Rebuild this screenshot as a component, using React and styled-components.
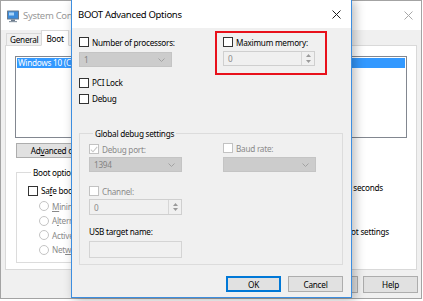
import React from 'react';
import styled, { createGlobalStyle } from 'styled-components';

const uiFont = `"Noto Sans", "Open Sans", sans-serif`;

const GlobalStyle = createGlobalStyle`
  html, body {
    margin: 0;
    padding: 0;
    background: #fff;
  }
  body {
    font-family: ${uiFont};
    font-size: 8.2px;
    letter-spacing: -0.25px;
    color: #000;
  }
  #root {
    width: 423px;
    height: 301px;
  }
`;

const Desktop = styled.div`
  position: relative;
  width: 423px;
  height: 301px;
  overflow: hidden;
  background: #fff;
`;

/* ---------- back window: System Configuration ---------- */

const BackWindow = styled.section`
  position: absolute;
  left: 0;
  top: 0;
  width: 422px;
  height: 299px;
  box-sizing: border-box;
  border: 1px solid #a3a3a3;
  background: #f0f0f0;
  display: flex;
  flex-direction: column;
`;

const BackTitle = styled.header`
  height: 29px;
  flex: none;
  background: #fff;
  display: flex;
  align-items: center;
  gap: 3px;
  padding: 0 8px 0 5px;
  color: #999;
  font-size: 9.5px;
  letter-spacing: -0.3px;
  svg.close {
    margin-left: auto;
  }
`;

const TabStrip = styled.div`
  display: flex;
  align-items: flex-end;
  height: 16px;
  padding-left: 5px;
  margin-bottom: -1px;
  position: relative;
  z-index: 1;
`;

const Tab = styled.div`
  box-sizing: border-box;
  height: ${(p) => (p.$active ? 16 : 13)}px;
  padding: 0 ${(p) => (p.$active ? 4 : 3)}px;
  display: flex;
  align-items: center;
  border: 1px solid #d9d9d9;
  border-bottom-color: ${(p) => (p.$active ? '#fff' : '#d9d9d9')};
  border-right: ${(p) => (p.$active ? '1px solid #d9d9d9' : 'none')};
  background: ${(p) => (p.$active ? '#fff' : '#f0f0f0')};
`;

const TabPanel = styled.div`
  box-sizing: border-box;
  margin: 0 0 0 4px;
  width: 412px;
  height: 225px;
  border: 1px solid #d9d9d9;
  background: #fff;
  padding: 10px 0 0 9px;
  display: flex;
  flex-direction: column;
`;

const ListBox = styled.div`
  box-sizing: border-box;
  width: 392px;
  height: 82px;
  border: 1px solid #828790;
  padding: 1px;
`;

const ListItem = styled.div`
  height: 10px;
  line-height: 10px;
  padding-left: 1px;
  white-space: nowrap;
  background: ${(p) => (p.$selected ? '#3399ff' : 'transparent')};
  color: ${(p) => (p.$selected ? '#fff' : '#000')};
`;

const ButtonRow = styled.div`
  display: flex;
  gap: ${(p) => p.$gap || 5}px;
  justify-content: ${(p) => (p.$end ? 'flex-end' : 'flex-start')};
  margin-top: ${(p) => p.$top || 0}px;
  padding: 0 ${(p) => p.$right || 0}px 0 ${(p) => p.$left || 0}px;
`;

const Button = styled.button`
  box-sizing: border-box;
  width: ${(p) => p.$w || 55}px;
  height: ${(p) => p.$h || 17}px;
  padding: 0;
  font: inherit;
  letter-spacing: inherit;
  color: #000;
  background: #e1e1e1;
  border: 1px solid ${(p) => (p.$default ? '#0078d7' : '#adadad')};
  box-shadow: ${(p) => (p.$default ? 'inset 0 0 0 1px #0078d7' : 'none')};
  u {
    text-decoration: underline;
  }
`;

const LowerArea = styled.div`
  display: flex;
  margin-top: 9px;
  padding-left: 1px;
`;

const GroupBox = styled.fieldset`
  box-sizing: border-box;
  margin: 0;
  width: ${(p) => p.$w}px;
  height: ${(p) => p.$h}px;
  border: 1px solid #dcdcdc;
  padding: ${(p) => p.$pad};
  legend {
    padding: 0 2px;
    margin-left: ${(p) => p.$legendLeft || 3}px;
    line-height: 11px;
    color: #000;
  }
`;

const OptionList = styled.div`
  display: flex;
  flex-direction: column;
  gap: ${(p) => p.$gap}px;
  padding: ${(p) => p.$top || 0}px 0 0 ${(p) => p.$indent || 0}px;
`;

const SideColumn = styled.div`
  margin-left: auto;
  margin-right: 27px;
  display: flex;
  flex-direction: column;
  align-items: flex-end;
  padding-top: 2px;
`;

const SideLabel = styled.div`
  align-self: flex-start;
  line-height: 11px;
`;

const TimeoutRow = styled.div`
  display: flex;
  align-items: center;
  gap: 4px;
  margin-right: 6px;
`;

const SmallInput = styled.div`
  box-sizing: border-box;
  width: 30px;
  height: 15px;
  border: 1px solid #7a7a7a;
  padding-left: 3px;
  line-height: 13px;
`;

const PermanentLabel = styled.div`
  margin-top: 31px;
  display: flex;
  gap: 3px;
  line-height: 11px;
`;

/* ---------- shared controls ---------- */

const Row = styled.label`
  display: flex;
  align-items: center;
  gap: 3px;
  height: ${(p) => p.$h || 11}px;
  margin-top: ${(p) => p.$top || 0}px;
  color: ${(p) => (p.$disabled ? '#8a8a8a' : '#000')};
  white-space: nowrap;
`;

const Box = styled.span`
  box-sizing: border-box;
  flex: none;
  width: 10px;
  height: 10px;
  border: 1px solid ${(p) => (p.$disabled ? '#c2c2c2' : '#333')};
  background: #fff;
  display: flex;
  align-items: center;
  justify-content: center;
`;

const Radio = styled.span`
  box-sizing: border-box;
  flex: none;
  width: 10px;
  height: 10px;
  border-radius: 50%;
  border: 1px solid #c4c4c4;
  background: #fff;
`;

const Combo = styled.div`
  box-sizing: border-box;
  width: ${(p) => p.$w || 93}px;
  height: 15px;
  margin-top: ${(p) => p.$top || 0}px;
  background: #cccccc;
  border: 1px solid #c4c4c4;
  color: #838383;
  display: flex;
  align-items: center;
  justify-content: space-between;
  padding: 0 6px 0 4px;
`;

const Spin = styled.div`
  box-sizing: border-box;
  width: ${(p) => p.$w || 93}px;
  height: ${(p) => p.$h || 16}px;
  margin-top: ${(p) => p.$top || 0}px;
  background: #f0f0f0;
  border: 1px solid #cfcfcf;
  color: #8a8a8a;
  display: flex;
  align-items: center;
  padding-left: 4px;
`;

const SpinButtons = styled.div`
  margin-left: auto;
  width: 12px;
  height: 100%;
  border-left: 1px solid #d6d6d6;
  display: flex;
  flex-direction: column;
  align-items: center;
  justify-content: space-evenly;
`;

const TextField = styled.div`
  box-sizing: border-box;
  width: 93px;
  height: 17px;
  margin-top: ${(p) => p.$top || 0}px;
  background: #f0f0f0;
  border: 1px solid #d4d4d4;
`;

/* ---------- front dialog ---------- */

const Dialog = styled.section`
  position: absolute;
  left: 71px;
  top: -1px;
  width: 281px;
  height: 299px;
  box-sizing: border-box;
  border: 1px solid #3d8ee0;
  background: #f0f0f0;
  box-shadow: 3px 2px 10px rgba(0, 0, 0, 0.28);
  display: flex;
  flex-direction: column;
  z-index: 2;
`;

const DialogTitle = styled.header`
  height: 28px;
  flex: none;
  background: #fff;
  display: flex;
  align-items: center;
  justify-content: space-between;
  padding: 0 10px 0 6px;
  font-size: 9.5px;
  letter-spacing: -0.3px;
`;

const DialogBody = styled.div`
  display: flex;
  flex-direction: column;
  padding: 3px 8px 0 7px;
`;

const TopGrid = styled.div`
  display: grid;
  grid-template-columns: 136px 112px;
  align-items: start;
`;

const Column = styled.div`
  display: flex;
  flex-direction: column;
  padding-top: ${(p) => p.$top || 0}px;
`;

const Highlight = styled.div`
  box-sizing: border-box;
  width: 112px;
  height: 44px;
  border: 2px solid #e8111b;
  padding: 3px 0 0 6px;
`;

const DebugGroup = styled(GroupBox)`
  margin-top: 24px;
`;

const DebugGrid = styled.div`
  display: grid;
  grid-template-columns: 134px 1fr;
`;

const Label = styled.div`
  height: 11px;
  line-height: 11px;
  margin-top: ${(p) => p.$top || 0}px;
  white-space: nowrap;
`;

/* ---------- icons ---------- */

const Chevron = () => (
  <svg width="7" height="4" viewBox="0 0 7 4">
    <polyline points="0.5,0.5 3.5,3.5 6.5,0.5" fill="none" stroke="#a2a2a2" strokeWidth="1" />
  </svg>
);

const SpinArrows = () => (
  <SpinButtons>
    <svg width="5" height="3" viewBox="0 0 5 3">
      <polygon points="2.5,0 5,3 0,3" fill="#9a9a9a" />
    </svg>
    <svg width="5" height="3" viewBox="0 0 5 3">
      <polygon points="0,0 5,0 2.5,3" fill="#9a9a9a" />
    </svg>
  </SpinButtons>
);

const Check = () => (
  <svg width="8" height="7" viewBox="0 0 8 7">
    <polyline points="0.8,3.6 3,5.8 7.2,0.8" fill="none" stroke="#c8c8c8" strokeWidth="1.1" />
  </svg>
);

const CloseIcon = ({ color }) => (
  <svg className="close" width="9" height="9" viewBox="0 0 9 9">
    <path d="M0.5 0.5 L8.5 8.5 M8.5 0.5 L0.5 8.5" stroke={color} strokeWidth="1" />
  </svg>
);

const MsconfigIcon = () => (
  <svg width="14" height="14" viewBox="0 0 14 14">
    <rect x="1" y="1.5" width="12" height="9" rx="0.5" fill="#6a7a8c" />
    <rect x="2" y="2.5" width="10" height="7" fill="#3b8ad9" />
    <rect x="3" y="3.5" width="5" height="3" fill="#a9d4f7" />
    <rect x="5" y="10.5" width="4" height="1.5" fill="#6a7a8c" />
    <rect x="3" y="12" width="8" height="1.2" fill="#8d99a6" />
  </svg>
);

const CheckBox = ({ label, disabled, checked, h, top }) => (
  <Row $disabled={disabled} $h={h} $top={top}>
    <Box $disabled={disabled}>{checked && <Check />}</Box>
    <span>{label}</span>
  </Row>
);

const RadioRow = ({ children }) => (
  <Row $disabled>
    <Radio />
    <span>{children}</span>
  </Row>
);

export default function App() {
  return (
    <>
      <GlobalStyle />
      <Desktop>
        <BackWindow>
          <BackTitle>
            <MsconfigIcon />
            <span>System Configuration</span>
            <CloseIcon color="#a8a8a8" />
          </BackTitle>
          <TabStrip>
            <Tab>General</Tab>
            <Tab $active>Boot</Tab>
          </TabStrip>
          <TabPanel>
            <ListBox>
              <ListItem $selected>Windows 10 (C:\Windows) : Current OS; Default OS</ListItem>
            </ListBox>
            <ButtonRow $top={5} $left={1}>
              <Button $w={100} $h={15}>
                Ad<u>v</u>anced options...
              </Button>
              <Button $w={70} $h={15}>Set as default</Button>
              <Button $w={50} $h={15}>Delete</Button>
            </ButtonRow>
            <LowerArea>
              <GroupBox $w={250} $h={96} $pad="6px 0 0 11px">
                <legend>Boot options</legend>
                <CheckBox label={<>Sa<u>f</u>e boot</>} top={1} />
                <OptionList $gap={3.5} $indent={11} $top={4.5}>
                  <RadioRow><u>M</u>inimal</RadioRow>
                  <RadioRow>A<u>l</u>ternate shell</RadioRow>
                  <RadioRow>Active Directory repair</RadioRow>
                  <RadioRow>Net<u>w</u>ork</RadioRow>
                </OptionList>
              </GroupBox>
              <SideColumn>
                <SideLabel>Timeout:</SideLabel>
                <TimeoutRow>
                  <SmallInput>30</SmallInput>
                  <span>seconds</span>
                </TimeoutRow>
                <PermanentLabel>
                  <Box />
                  <span>
                    Make all boot settings
                    <br />
                    permanent
                  </span>
                </PermanentLabel>
              </SideColumn>
            </LowerArea>
          </TabPanel>
          <ButtonRow $end $top={6} $right={3}>
            <Button>OK</Button>
            <Button>Cancel</Button>
            <Button>Apply</Button>
            <Button>Help</Button>
          </ButtonRow>
        </BackWindow>

        <Dialog>
          <DialogTitle>
            <span>BOOT Advanced Options</span>
            <CloseIcon color="#1f1f1f" />
          </DialogTitle>
          <DialogBody>
            <TopGrid>
              <Column $top={6}>
                <CheckBox label="Number of processors:" h={10} />
                <Combo $top={5} $w={93}>
                  <span>1</span>
                  <Chevron />
                </Combo>
                <CheckBox label="PCI Lock" top={10} />
                <CheckBox label="Debug" top={5} />
              </Column>
              <Highlight>
                <CheckBox label="Maximum memory:" h={10} top={1} />
                <Spin $top={4} $w={92} $h={15}>
                  <span>0</span>
                  <SpinArrows />
                </Spin>
              </Highlight>
            </TopGrid>

            <DebugGroup $w={264} $h={137} $pad="5px 0 0 9px" $legendLeft={4}>
              <legend>Global debug settings</legend>
              <DebugGrid>
                <Column>
                  <CheckBox label="Debug port:" disabled checked h={10} />
                  <Combo $top={3}>
                    <span>1394</span>
                    <Chevron />
                  </Combo>
                  <CheckBox label="Channel:" disabled h={10} top={14} />
                  <Spin $top={3}>
                    <span>0</span>
                    <SpinArrows />
                  </Spin>
                  <Label $top={11}>USB target name:</Label>
                  <TextField $top={4} />
                </Column>
                <Column>
                  <CheckBox label="Baud rate:" disabled h={10} top={-1} />
                  <Combo $top={4}>
                    <span />
                    <Chevron />
                  </Combo>
                </Column>
              </DebugGrid>
            </DebugGroup>

            <ButtonRow $end $gap={7} $top={11} $right={0}>
              <Button $default $h={16}>OK</Button>
              <Button $h={16}>Cancel</Button>
            </ButtonRow>
          </DialogBody>
        </Dialog>
      </Desktop>
    </>
  );
}
